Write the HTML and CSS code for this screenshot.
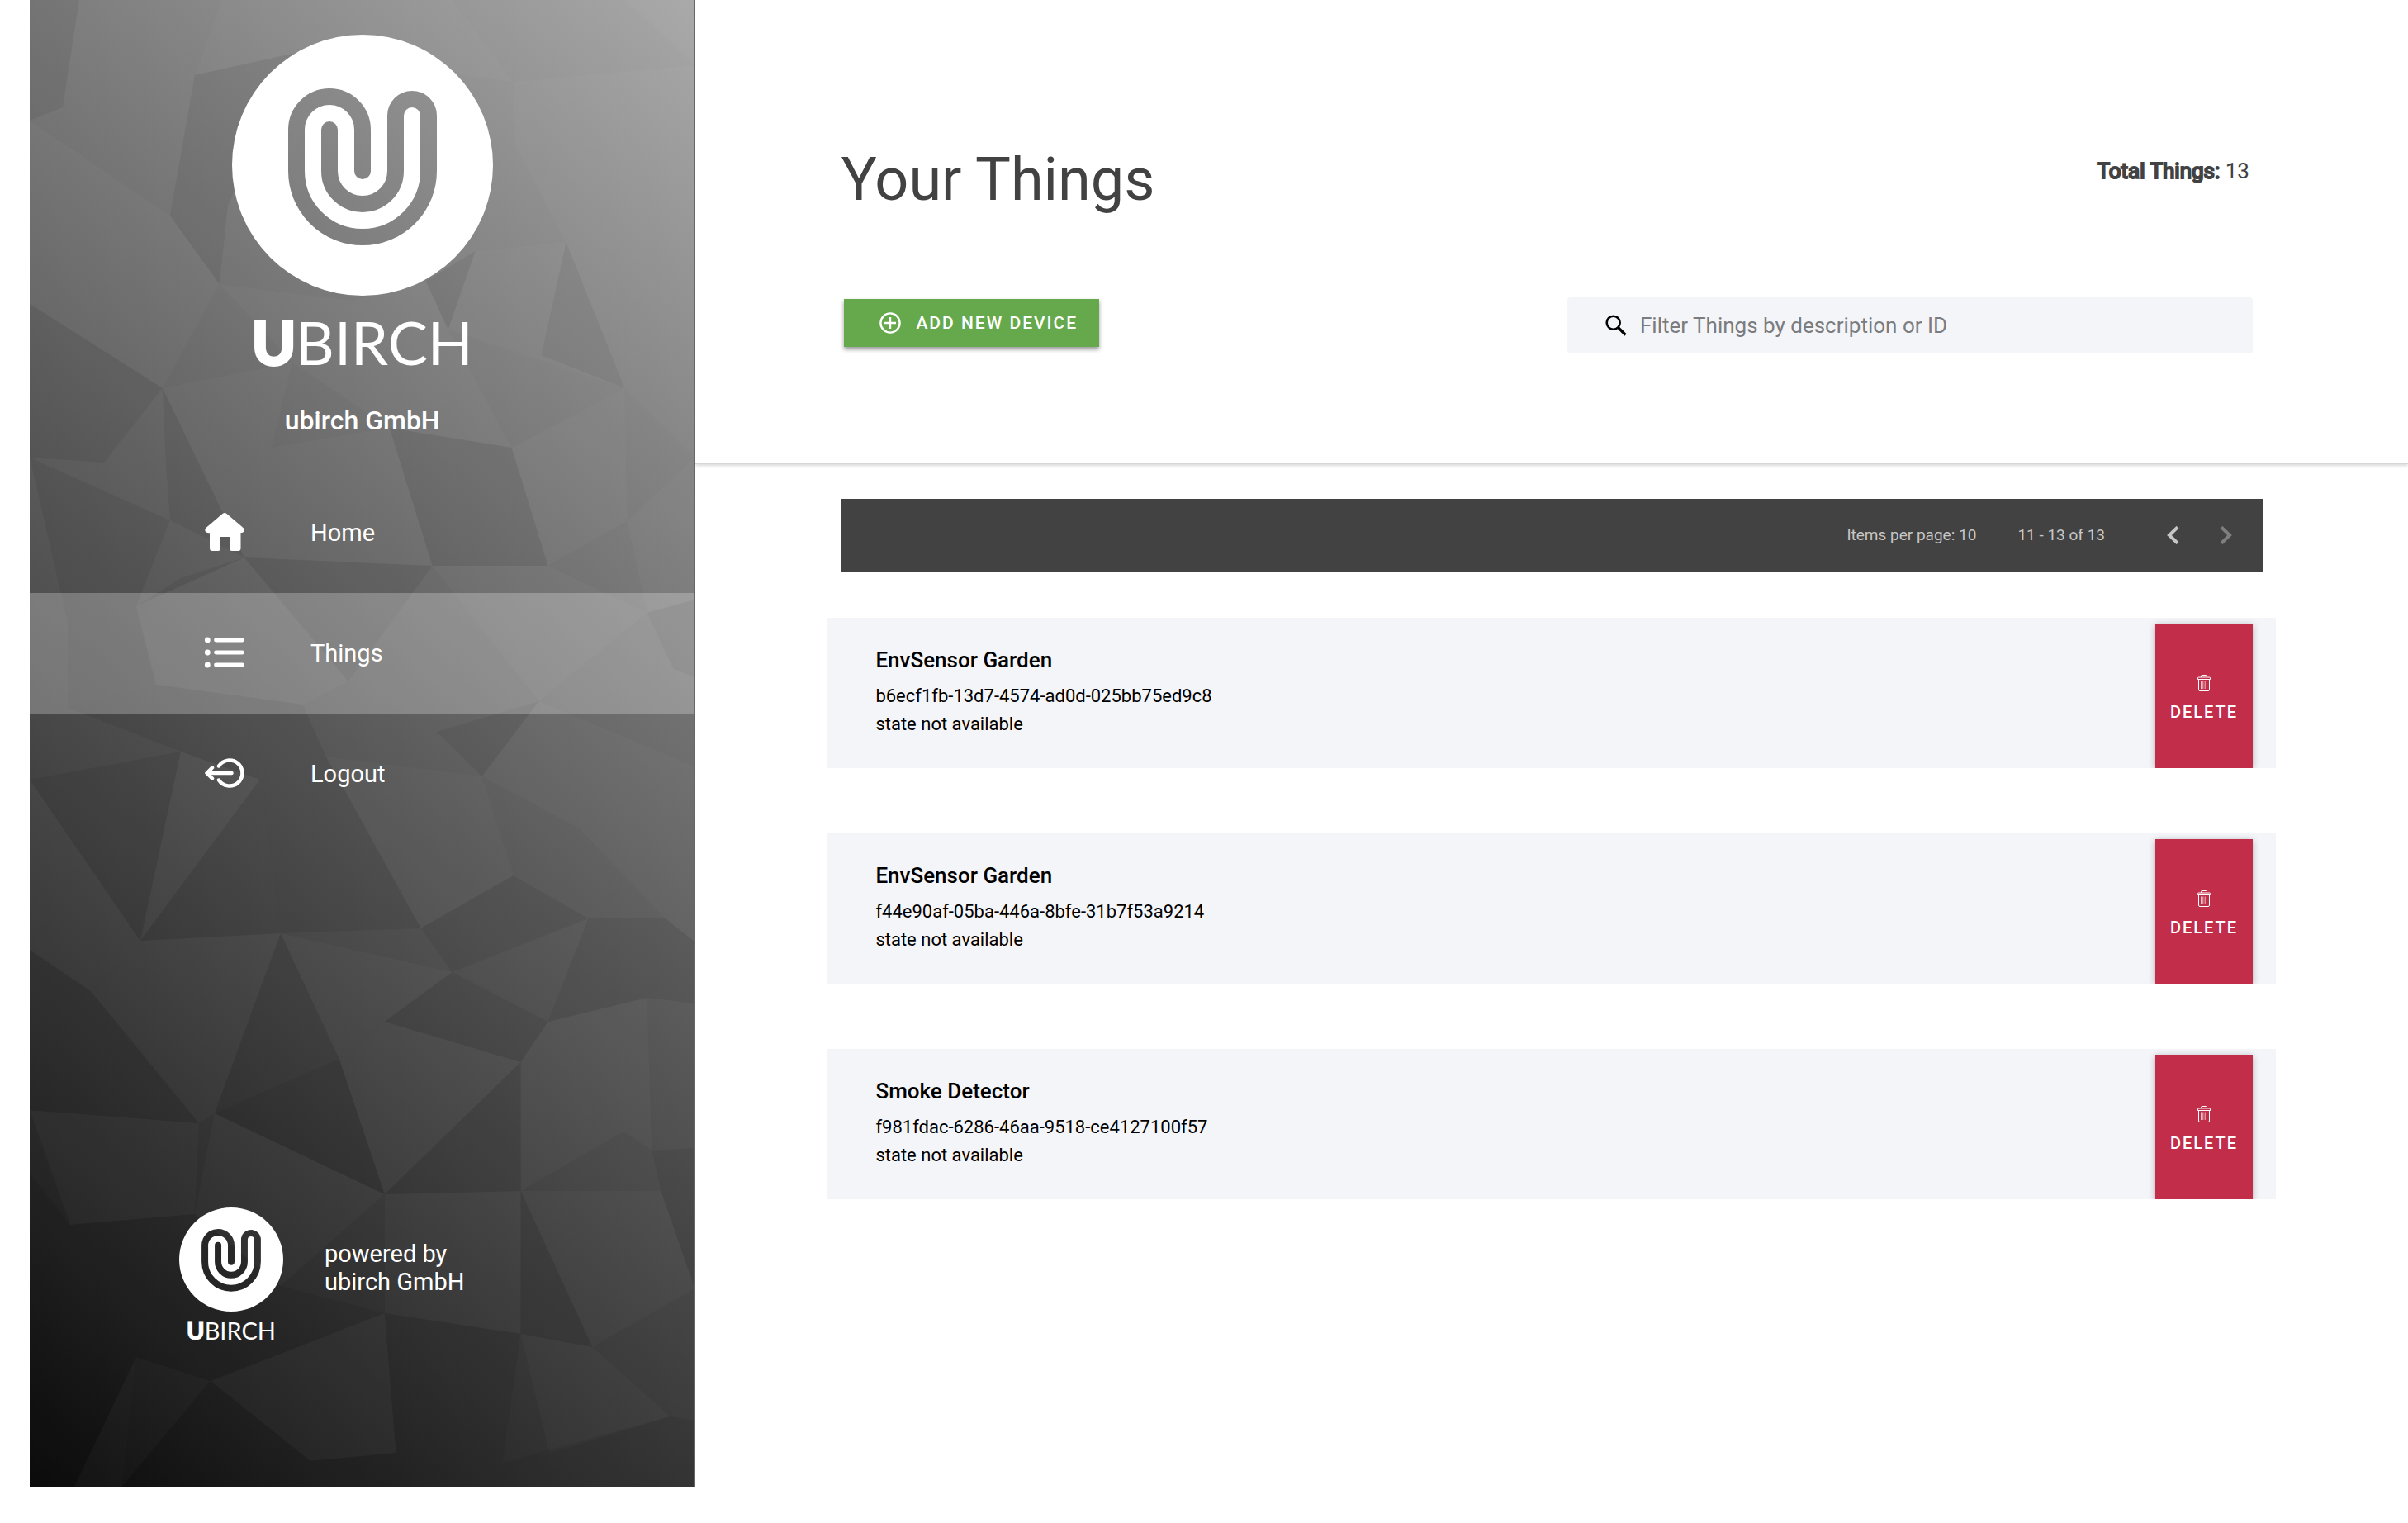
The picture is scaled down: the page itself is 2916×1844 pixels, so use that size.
FILE: index.html
```html
<!DOCTYPE html>
<html lang="en">
<head>
<meta charset="utf-8">
<title>Your Things</title>
<link rel="stylesheet" href="styles.css">
</head>
<body>
<svg class="defs" aria-hidden="true">
  <defs>
    <mask id="spiral">
      <circle cx="158" cy="158" r="158" fill="#fff"/>
      <path d="M158 165V115A40 40 0 0 0 78 115V165A80 80 0 0 0 238 165V98A20 20 0 0 0 198 98V165A40 40 0 0 1 118 165V115" fill="none" stroke="#000" stroke-width="20" stroke-linecap="round"/>
    </mask>
    <symbol id="emblem" viewBox="0 0 316 316"><rect width="316" height="316" fill="#fff" mask="url(#spiral)"/></symbol>
    <symbol id="trash" viewBox="0 0 16 20">
      <g fill="none" stroke="currentColor">
        <path d="M4.500 3V1.500Q4.500 .5 5.500 .5H10.500Q11.500 .5 11.500 1.500V3M.5 5.500V4Q.5 3 1.500 3H14.500Q15.500 3 15.500 4V5.500ZM1.500 5.500V18Q1.500 19.500 3 19.500H13Q14.500 19.500 14.500 18V5.500"/>
        <path d="M4.500 7.500V17M6.800 7.500V17M9.200 7.500V17M11.500 7.500V17" opacity=".7"/>
      </g>
    </symbol>
  </defs>
</svg>

<div class="app">
  <aside class="sidebar">
    <svg class="facets" viewBox="0 0 806 1800" preserveAspectRatio="none" aria-hidden="true">
      <defs>
        <linearGradient id="shade" gradientUnits="userSpaceOnUse" x1="0" y1="1800" x2="1263" y2="335">
          <stop offset="0" stop-color="#0c0c0c"/><stop offset=".12" stop-color="#202020"/><stop offset=".5" stop-color="#5c5c5c"/><stop offset="1" stop-color="#ababab"/>
        </linearGradient>
      </defs>
      <rect width="806" height="1800" fill="url(#shade)"/>
      <g class="lit">
        <path d="M233 0L318 65L200 91ZM512 0L586 99L318 65L233 0ZM721 0L806 79V0ZM586 99L806 79V336L650 293L589 178Z"/>
        <path d="M0 146L170 261L230 344L161 470L0 368ZM392 364L480 340L507 399L584 542L436 518L318 439ZM230 344L392 364L318 439Z"/>
        <path d="M650 293L806 336V554L721 470ZM540 304L650 293L721 470L507 399ZM584 542L721 470L724 631L628 685Z"/>
        <path d="M161 470L318 439L293 542L260 675ZM293 542L436 518L488 685L260 675ZM724 631L806 554V726L748 742Z"/>
        <path d="M488 685L628 685L748 742L617 849ZM260 675L386 825L331 853L153 829L129 734ZM617 849L806 928L666 1003L548 940Z"/>
        <path d="M183 910L279 944L134 1139ZM359 916L548 940L586 1060L474 1124ZM0 944L134 1139L74 1200L0 1150Z"/>
        <path d="M134 1139L304 1130L224 1348L205 1360L74 1200ZM304 1130L512 1177L430 1237L375 1282ZM666 1003L806 928V1140L770 1112Z"/>
        <path d="M375 1282L430 1237L595 1286L430 1446ZM628 1237L748 1208L754 1393L595 1286ZM595 1286L720 1370L595 1442Z"/>
        <path d="M0 1344L205 1360L200 1470L49 1483ZM224 1348L430 1446L304 1557L200 1470ZM430 1446L595 1442L595 1615L430 1590Z"/>
        <path d="M595 1442L765 1442L806 1560L682 1631ZM129 1643L219 1672L112 1800H54ZM219 1672L430 1590L444 1759L340 1769ZM595 1615L682 1631L776 1715L630 1760Z"/>
      </g>
      <g class="dim">
        <path d="M0 0H60L40 130L0 146ZM170 261L200 91L318 65L240 250L230 344ZM480 340L540 304L507 399ZM0 368L161 470L90 560L0 554Z"/>
        <path d="M161 470L260 675L170 630L165 560ZM0 554L170 630L129 734L46 754ZM436 518L584 542L628 685L488 685ZM260 675L488 685L386 825Z"/>
        <path d="M129 734L260 675L183 700ZM46 857L153 829L331 853L359 916L279 944L183 910ZM493 886L617 849L548 940ZM806 726L748 742L780 810L806 820Z"/>
        <path d="M0 944L183 910L134 1139ZM279 944L359 916L474 1124L304 1130ZM586 1060L677 1112L512 1177L474 1124ZM677 1112H770L806 1140V1215L748 1208L628 1237Z"/>
        <path d="M0 1150L74 1200L205 1360L0 1344ZM224 1348L304 1130L375 1282L430 1446ZM430 1237L512 1177L628 1237L595 1286ZM430 1446L595 1286V1442Z"/>
        <path d="M0 1420L49 1483L129 1643L0 1655ZM49 1483L200 1470L304 1557L129 1643ZM765 1442L754 1393L806 1390V1560ZM304 1557L430 1590L219 1672L129 1643Z"/>
        <path d="M0 1655L129 1643L54 1800L0 1742ZM219 1672L340 1769L370 1800H112ZM430 1590L595 1615L573 1771L444 1759ZM340 1769L444 1759L573 1771L776 1715L806 1720V1800H370Z"/>
      </g>
      <g class="deep">
        <path d="M0 1742L54 1800H0ZM46 754L129 734L153 829L46 857ZM279 944L304 1130L134 1139ZM595 1442L682 1631L595 1615ZM129 1643L219 1672L112 1800Z"/>
        <path d="M375 1282L430 1446L224 1348ZM650 293L721 470L620 430Z"/>
      </g>
    </svg>

    <div class="brand">
      <svg class="brand-emblem" role="img" aria-label="ubirch emblem"><use href="#emblem"/></svg>
      <div class="brand-word"><b>U</b>BIRCH</div>
      <p class="brand-company">ubirch GmbH</p>
    </div>

    <nav class="nav">
      <a class="nav-item" href="#home">
        <svg class="nav-icon" viewBox="0 0 48 48" fill="#fff"><path d="M21.500 1Q24 -1 26.500 1L46.500 18Q48.500 20 47.300 22.500Q45.800 24.500 43.500 24V43Q43.500 46 40.500 46H33Q30 46 30 43V29H19V43Q19 46 16 46H9Q6 46 6 43V24Q2.500 24.800 .8 22.500Q-.5 20 1.500 18Z"/></svg>
        <span>Home</span>
      </a>
      <a class="nav-item nav-item-active" href="#things" aria-current="page">
        <svg class="nav-icon" viewBox="0 0 48 48"><g stroke="#fff" stroke-width="4.800" stroke-linecap="round"><path d="M13.500 8H45.500M13.500 23H45.500M13.500 38H45.500"/><path d="M3.300 8h.01M3.300 23h.01M3.300 38h.01" stroke-width="6.800"/></g></svg>
        <span>Things</span>
      </a>
      <a class="nav-item" href="#logout">
        <svg class="nav-icon" viewBox="0 0 48 48" fill="none" stroke="#fff" stroke-width="4.500" stroke-linecap="round" stroke-linejoin="round"><path d="M17 14.500A15.500 15.500 0 1 1 17 31.500M32.500 23H3M9 16.500L2.500 23L9 29.500"/></svg>
        <span>Logout</span>
      </a>
    </nav>

    <footer class="powered">
      <div class="powered-logo">
        <svg class="powered-emblem" role="img" aria-label="ubirch emblem"><use href="#emblem"/></svg>
        <div class="powered-word"><b>U</b>BIRCH</div>
      </div>
      <p class="powered-text">powered by<br>ubirch GmbH</p>
    </footer>
  </aside>

  <main class="main">
    <header class="header">
      <div class="header-row">
        <h1 class="title">Your Things</h1>
        <p class="total"><span class="total-label">Total Things:</span> 13</p>
      </div>
      <div class="header-row">
        <button class="add" type="button">
          <svg class="add-icon" viewBox="0 0 26 26" fill="none" stroke="#fff" stroke-width="2.400"><circle cx="13" cy="13" r="11.600"/><path d="M13 6V20M6 13H20"/></svg>
          <span>ADD NEW DEVICE</span>
        </button>
        <label class="search">
          <svg class="search-icon" viewBox="0 0 26 26" fill="none" stroke="#000"><circle cx="9.700" cy="9.700" r="8" stroke-width="2.600"/><path d="M15.500 15.500L24.500 24.500" stroke-width="3.200"/></svg>
          <input class="search-input" type="text" aria-label="Filter Things" placeholder="Filter Things by description or ID">
        </label>
      </div>
    </header>

    <section class="content">
      <div class="pager">
        <span class="pager-size">Items per page: 10</span>
        <span class="pager-range">11 - 13 of 13</span>
        <button class="pager-button" type="button" aria-label="Previous page"><svg viewBox="0 0 15 22"><path d="M13 1.300L3 11L13 20.700"/></svg></button>
        <button class="pager-button" type="button" aria-label="Next page" disabled><svg viewBox="0 0 15 22"><path d="M2 1.300L12 11L2 20.700"/></svg></button>
      </div>

      <ul class="things">
        <li class="thing">
          <div class="thing-info">
            <h2 class="thing-name">EnvSensor Garden</h2>
            <p class="thing-line">b6ecf1fb-13d7-4574-ad0d-025bb75ed9c8</p>
            <p class="thing-line">state not available</p>
          </div>
          <button class="delete" type="button"><svg class="delete-icon"><use href="#trash"/></svg><span>DELETE</span></button>
        </li>
        <li class="thing">
          <div class="thing-info">
            <h2 class="thing-name">EnvSensor Garden</h2>
            <p class="thing-line">f44e90af-05ba-446a-8bfe-31b7f53a9214</p>
            <p class="thing-line">state not available</p>
          </div>
          <button class="delete" type="button"><svg class="delete-icon"><use href="#trash"/></svg><span>DELETE</span></button>
        </li>
        <li class="thing">
          <div class="thing-info">
            <h2 class="thing-name">Smoke Detector</h2>
            <p class="thing-line">f981fdac-6286-46aa-9518-ce4127100f57</p>
            <p class="thing-line">state not available</p>
          </div>
          <button class="delete" type="button"><svg class="delete-icon"><use href="#trash"/></svg><span>DELETE</span></button>
        </li>
      </ul>
    </section>
  </main>
</div>
</body>
</html>
```
FILE: styles.css
```css
* { box-sizing: border-box; }

body {
  margin: 0;
  background: #fff;
  color: #000;
  font-family: Roboto, "Liberation Sans", sans-serif;
}

h1, h2, p, ul { margin: 0; padding: 0; }
ul { list-style: none; }
button { border: 0; border-radius: 0; padding: 0; font-family: inherit; cursor: pointer; }

.defs { position: absolute; width: 0; height: 0; }

.app { display: flex; min-height: 100vh; padding-left: 36px; }

/* Sidebar */
.sidebar {
  position: relative;
  isolation: isolate;
  flex: 0 0 28%;
  display: flex;
  flex-direction: column;
  margin-bottom: 44px;
  padding: 42px 0 172px;
  border-right: 1px solid #666;
  color: #fff;
}

.facets { position: absolute; z-index: -1; top: 0; left: 0; width: 100%; height: 100%; }
.lit { fill: #fff; fill-opacity: 0.025; }
.dim { fill: #000; fill-opacity: 0.06; }
.deep { fill: #000; fill-opacity: 0.05; }

.brand { display: flex; flex-direction: column; align-items: center; }
.brand-emblem { width: 316px; height: 316px; }
.brand-word { margin-top: 14px; font: 400 72px/84px Lato, sans-serif; }
.brand-word b { font-weight: 900; -webkit-text-stroke: 3px #fff; }
.brand-company { margin-top: 34px; font-size: 32px; line-height: 38px; font-weight: 500; }

.nav { margin-top: 44px; }
.nav-item {
  display: flex;
  align-items: center;
  gap: 80px;
  height: 146px;
  padding-left: 212px;
  color: #fff;
  font-size: 29px;
  line-height: 34px;
  text-decoration: none;
}
.nav-item-active { background: rgba(255, 255, 255, 0.25); }
.nav-icon { width: 48px; height: 48px; overflow: visible; }

.powered { display: flex; gap: 50px; margin-top: auto; padding-left: 181px; }
.powered-logo { display: flex; flex-direction: column; align-items: center; gap: 6px; }
.powered-emblem { width: 126px; height: 126px; }
.powered-word { font: 400 29px/34px Lato, sans-serif; }
.powered-word b { font-weight: 900; -webkit-text-stroke: 1px #fff; }
.powered-text { padding-top: 39px; font-size: 29px; line-height: 34px; }

/* Header */
.main { flex: 1; min-width: 0; }
.header {
  display: flex;
  flex-direction: column;
  gap: 100px;
  min-height: 562px;
  padding: 176px 176px 0;
  border-bottom: 2px solid #d6d6d6;
  box-shadow: 0 2px 4px rgba(0, 0, 0, 0.15);
}
.header-row { display: flex; justify-content: space-between; align-items: flex-start; }
.title { color: #424242; font-size: 72px; line-height: 84px; font-weight: 400; }
.total { margin: 15px 16px 0; color: #424242; font-size: 26px; line-height: 32px; }
.total-label { -webkit-text-stroke: 2px #424242; }

.add {
  display: flex;
  align-items: center;
  gap: 18px;
  height: 58px;
  margin: 2px 4px;
  padding: 0 26px 0 43px;
  background: #66a94d;
  box-shadow: 0 3px 5px rgba(0, 0, 0, 0.4);
  color: #fff;
  font-size: 21px;
  line-height: 26px;
  font-weight: 500;
  letter-spacing: 2px;
}
.add-icon { width: 26px; height: 26px; }

.search {
  flex: 0 1 830px;
  display: flex;
  align-items: center;
  gap: 16px;
  height: 68px;
  margin-right: 12px;
  padding: 0 46px;
  border-radius: 4px;
  background: #f4f5f9;
}
.search-icon { flex: none; width: 26px; height: 26px; }
.search-input {
  flex: 1;
  min-width: 0;
  padding: 0;
  border: 0;
  outline: 0;
  background: none;
  color: #424242;
  font: 400 26px/32px Roboto, sans-serif;
}
.search-input::placeholder { color: #7b7c7f; opacity: 1; }

/* List */
.content { padding: 42px 160px 80px; }
.pager {
  display: flex;
  justify-content: flex-end;
  align-items: center;
  height: 88px;
  margin: 0 16px;
  padding-right: 13px;
  background: #424242;
  color: #c6c6c6;
  font-size: 19px;
  line-height: 24px;
}
.pager-range { margin: 0 50px; }
.pager-button { display: flex; justify-content: center; width: 64px; background: none; color: #c6c6c6; }
.pager-button:disabled { color: #7f7f7f; }
.pager-button svg { width: 15px; height: 22px; fill: none; stroke: currentColor; stroke-width: 4px; }

.things { display: flex; flex-direction: column; gap: 79px; margin-top: 56px; }
.thing {
  display: flex;
  justify-content: space-between;
  min-height: 182px;
  padding: 0 28px 0 58px;
  background: #f4f5f9;
  overflow: hidden;
}
.thing-info { padding-top: 35px; }
.thing-name { margin-bottom: 11px; font-size: 26px; line-height: 32px; font-weight: 500; }
.thing-line { font-size: 22px; line-height: 34px; }

.delete {
  display: flex;
  flex-direction: column;
  align-items: center;
  gap: 13px;
  width: 118px;
  margin-top: 7px;
  padding-top: 62px;
  background: #c22d49;
  box-shadow: 0 2px 8px rgba(0, 0, 0, 0.3);
  color: #fff;
  font-size: 20px;
  line-height: 24px;
  font-weight: 500;
  letter-spacing: 2px;
}
.delete-icon { width: 16px; height: 20px; }
```
